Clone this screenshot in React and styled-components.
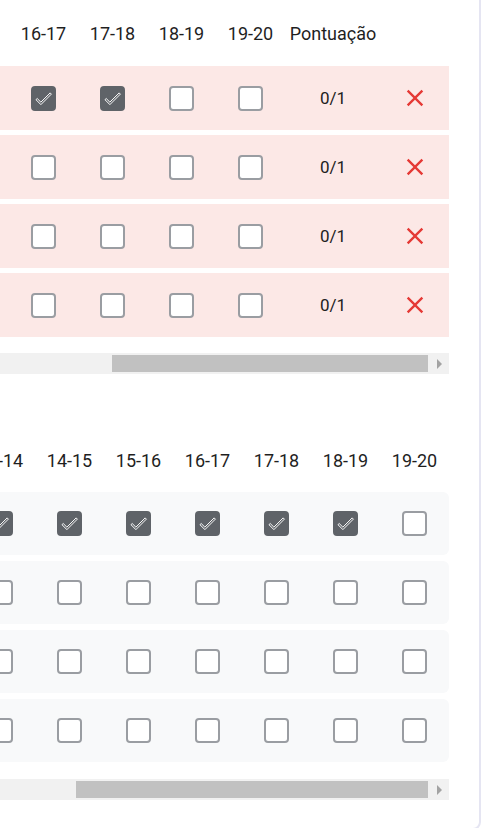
import React, { useLayoutEffect, useRef, useState } from 'react';
import styled, { createGlobalStyle } from 'styled-components';

const GlobalStyle = createGlobalStyle`
  * { box-sizing: border-box; }
  html, body { margin: 0; padding: 0; background: #ffffff; overflow: hidden; }
  body { font-family: Roboto, "Noto Sans", Arial, sans-serif; color: #212121; }
`;

const pad = (n) => String(n).padStart(2, '0');
const HOURS = Array.from({ length: 14 }, (_, i) => `${pad(6 + i)}-${pad(7 + i)}`);

const LEAD = [58, 260, 160];
const HOUR_W = 69;
const SCORE_W = 96;
const ACTION_W = 68;

const STUDENTS = [
  { n: 1, name: 'Ana Souza', group: '3º A' },
  { n: 2, name: 'Bruno Lima', group: '3º A' },
  { n: 3, name: 'Carla Dias', group: '3º A' },
  { n: 4, name: 'Diego Alves', group: '3º A' },
];

const SCORE_CHECKS = [['16-17', '17-18'], [], [], []];
const PRESENCE_CHECKS = [
  ['13-14', '14-15', '15-16', '16-17', '17-18', '18-19'],
  [],
  [],
  [],
];

const Viewport = styled.div`
  width: 482px;
  height: 830px;
  overflow: hidden;
  padding-right: 1px;
  display: flex;
  flex-direction: column;
  justify-content: flex-end;
  align-items: flex-end;
`;

const Card = styled.section`
  flex: none;
  width: 798px;
  background: #ffffff;
  border: 2px solid #e5e5f2;
  border-radius: 8px;
  padding: 24px 30px 28px 30px;
  display: flex;
  flex-direction: column;
  gap: 60px;
`;

const Section = styled.div`
  display: flex;
  flex-direction: column;
`;

const Scroller = styled.div`
  width: 100%;
  overflow-x: auto;
  overflow-y: hidden;
  scrollbar-width: none;
  &::-webkit-scrollbar { display: none; }
`;

const Table = styled.div`
  width: ${(p) => p.$width}px;
  display: flex;
  flex-direction: column;
  gap: ${(p) => p.$gap}px;
`;

const HeadRow = styled.div`
  display: grid;
  grid-template-columns: ${(p) => p.$cols};
  height: ${(p) => p.$height}px;
  align-items: center;
`;

const HeadCell = styled.div`
  font-size: 18px;
  color: #1f1f1f;
  text-align: ${(p) => (p.$left ? 'left' : 'center')};
  white-space: nowrap;
  padding: ${(p) => (p.$left ? '0 12px' : '0')};
`;

const Body = styled.div`
  display: flex;
  flex-direction: column;
  gap: ${(p) => p.$gap}px;
`;

const DataRow = styled.div`
  display: grid;
  grid-template-columns: ${(p) => p.$cols};
  height: ${(p) => p.$height}px;
  align-items: center;
  background: ${(p) => p.$bg};
  border-radius: ${(p) => p.$radius}px;
`;

const Cell = styled.div`
  display: flex;
  align-items: center;
  justify-content: ${(p) => (p.$left ? 'flex-start' : 'center')};
  padding: ${(p) => (p.$left ? '0 12px' : '0')};
  font-size: 17px;
  color: #212121;
  white-space: nowrap;
`;

const Box = styled.span`
  width: 25px;
  height: 25px;
  border-radius: 4px;
  border: 2px solid ${(p) => (p.$checked ? '#5f6368' : '#9a9da2')};
  background: ${(p) => (p.$checked ? '#5f6368' : '#ffffff')};
  display: flex;
  align-items: center;
  justify-content: center;
`;

const RemoveButton = styled.button`
  border: 0;
  background: transparent;
  padding: 0;
  display: flex;
  align-items: center;
  justify-content: center;
  cursor: pointer;
`;

const Track = styled.div`
  margin-top: ${(p) => p.$top}px;
  height: 21px;
  display: flex;
  background: #f1f1f1;
`;

const ArrowButton = styled.span`
  flex: none;
  width: 20px;
  height: 21px;
  display: flex;
  align-items: center;
  justify-content: center;
  &::after {
    content: '';
    width: 0;
    height: 0;
    border-top: 5px solid transparent;
    border-bottom: 5px solid transparent;
    ${(p) => (p.$dir === 'left' ? 'border-right' : 'border-left')}: 5px solid #a3a3a3;
  }
`;

const ThumbArea = styled.div`
  flex: 1;
  display: flex;
  align-items: center;
  padding-right: 1px;
`;

const Thumb = styled.div`
  flex: none;
  height: 17px;
  background: #c1c1c1;
`;

function CheckMark() {
  return (
    <svg width="23" height="23" viewBox="0 0 24 24" aria-hidden="true">
      <path
        d="M9 16.17L4.83 12l-1.42 1.41L9 19 21 7l-1.41-1.41z"
        fill="none"
        stroke="#ffffff"
        strokeWidth="1.1"
      />
    </svg>
  );
}

function CloseIcon() {
  return (
    <svg width="28" height="28" viewBox="0 0 24 24" aria-hidden="true">
      <path
        fill="#e53935"
        d="M19 6.41 17.59 5 12 10.59 6.41 5 5 6.41 10.59 12 5 17.59 6.41 19 12 13.41 17.59 19 19 17.59 13.41 12z"
      />
    </svg>
  );
}

function Checkbox({ checked }) {
  return (
    <Box role="checkbox" aria-checked={checked} $checked={checked}>
      {checked && <CheckMark />}
    </Box>
  );
}

function ScrollBar({ metrics, top }) {
  const { client, scroll, left, area } = metrics;
  const ratio = scroll > 0 ? client / scroll : 1;
  const thumb = Math.max(20, area * ratio);
  const max = Math.max(1, scroll - client);
  const offset = (left / max) * (area - thumb);
  return (
    <Track $top={top}>
      <ArrowButton $dir="left" />
      <ThumbArea>
        <Thumb style={{ width: `${thumb}px`, marginLeft: `${offset}px` }} />
      </ThumbArea>
      <ArrowButton $dir="right" />
    </Track>
  );
}

function useEndScroll() {
  const ref = useRef(null);
  const [metrics, setMetrics] = useState({ client: 1, scroll: 1, left: 0, area: 0 });
  useLayoutEffect(() => {
    const el = ref.current;
    if (!el) return undefined;
    el.scrollLeft = el.scrollWidth;
    const update = () =>
      setMetrics({
        client: el.clientWidth,
        scroll: el.scrollWidth,
        left: el.scrollLeft,
        area: el.clientWidth - 41,
      });
    update();
    el.addEventListener('scroll', update);
    return () => el.removeEventListener('scroll', update);
  }, []);
  return [ref, metrics];
}

function ScoreTable() {
  const [ref, metrics] = useEndScroll();
  const widths = [...LEAD, ...HOURS.map(() => HOUR_W), SCORE_W, ACTION_W];
  const cols = widths.map((w) => `${w}px`).join(' ');
  const total = widths.reduce((a, b) => a + b, 0);
  return (
    <Section>
      <Scroller ref={ref}>
        <Table $width={total} $gap={5}>
          <HeadRow $cols={cols} $height={56}>
            <HeadCell $left>Nº</HeadCell>
            <HeadCell $left>Nome</HeadCell>
            <HeadCell $left>Turma</HeadCell>
            {HOURS.map((h) => (
              <HeadCell key={h}>{h}</HeadCell>
            ))}
            <HeadCell>Pontuação</HeadCell>
            <HeadCell />
          </HeadRow>
          <Body $gap={5}>
            {STUDENTS.map((s, i) => (
              <DataRow key={s.n} $cols={cols} $height={64} $bg="#fce8e6" $radius={0}>
                <Cell $left>{s.n}</Cell>
                <Cell $left>{s.name}</Cell>
                <Cell $left>{s.group}</Cell>
                {HOURS.map((h) => (
                  <Cell key={h}>
                    <Checkbox checked={SCORE_CHECKS[i].includes(h)} />
                  </Cell>
                ))}
                <Cell>0/1</Cell>
                <Cell>
                  <RemoveButton type="button" aria-label="Remover">
                    <CloseIcon />
                  </RemoveButton>
                </Cell>
              </DataRow>
            ))}
          </Body>
        </Table>
      </Scroller>
      <ScrollBar metrics={metrics} top={16} />
    </Section>
  );
}

function PresenceTable() {
  const [ref, metrics] = useEndScroll();
  const widths = [...LEAD, ...HOURS.map(() => HOUR_W)];
  const cols = widths.map((w) => `${w}px`).join(' ');
  const total = widths.reduce((a, b) => a + b, 0);
  return (
    <Section>
      <Scroller ref={ref}>
        <Table $width={total} $gap={6}>
          <HeadRow $cols={cols} $height={52}>
            <HeadCell $left>Nº</HeadCell>
            <HeadCell $left>Nome</HeadCell>
            <HeadCell $left>Turma</HeadCell>
            {HOURS.map((h) => (
              <HeadCell key={h}>{h}</HeadCell>
            ))}
          </HeadRow>
          <Body $gap={6}>
            {STUDENTS.map((s, i) => (
              <DataRow key={s.n} $cols={cols} $height={63} $bg="#f8f9fa" $radius={6}>
                <Cell $left>{s.n}</Cell>
                <Cell $left>{s.name}</Cell>
                <Cell $left>{s.group}</Cell>
                {HOURS.map((h) => (
                  <Cell key={h}>
                    <Checkbox checked={PRESENCE_CHECKS[i].includes(h)} />
                  </Cell>
                ))}
              </DataRow>
            ))}
          </Body>
        </Table>
      </Scroller>
      <ScrollBar metrics={metrics} top={17} />
    </Section>
  );
}

export default function App() {
  return (
    <>
      <GlobalStyle />
      <Viewport>
        <Card>
          <ScoreTable />
          <PresenceTable />
        </Card>
      </Viewport>
    </>
  );
}
